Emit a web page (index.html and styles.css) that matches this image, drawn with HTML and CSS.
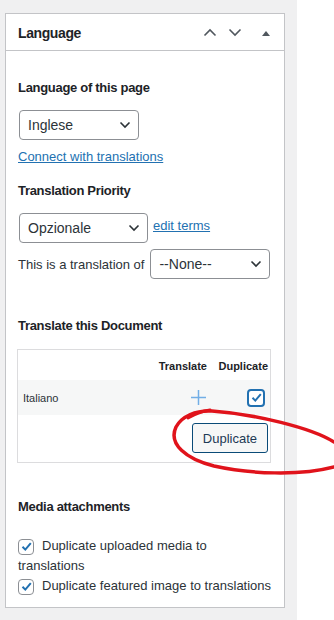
FILE: index.html
```html
<!DOCTYPE html>
<html lang="en">
<head>
    <meta charset="UTF-8">
    <title>Language</title>
    <link rel="stylesheet" href="styles.css">
</head>
<body>
    <div class="sidebar">
        <div class="postbox">
            <div class="postbox-header">
                <h2>Language</h2>
                <div class="handle-actions">
                    <svg class="chev" width="14" height="9" viewBox="0 0 14 9"><path d="M1.5 7.5 L7 2 L12.5 7.5" fill="none" stroke="#50575e" stroke-width="1.6"/></svg>
                    <svg class="chev" width="14" height="9" viewBox="0 0 14 9"><path d="M1.5 1.5 L7 7 L12.5 1.5" fill="none" stroke="#50575e" stroke-width="1.6"/></svg>
                    <svg class="toggle" width="10" height="6" viewBox="0 0 10 6"><path d="M1 6 L5 1 L9 6 Z" fill="#50575e"/></svg>
                </div>
            </div>

            <div class="inside">
                <p class="field-title first">Language of this page</p>
                <div class="select lang-select">
                    <span>Inglese</span>
                    <svg width="12" height="8" viewBox="0 0 12 8"><path d="M1.5 1.5 L6 6 L10.5 1.5" fill="none" stroke="#2c3338" stroke-width="1.6"/></svg>
                </div>
                <a class="link connect" href="#">Connect with translations</a>

                <p class="field-title priority">Translation Priority</p>
                <div class="inline-row priority-row">
                    <div class="select prio-select">
                        <span>Opzionale</span>
                        <svg width="12" height="8" viewBox="0 0 12 8"><path d="M1.5 1.5 L6 6 L10.5 1.5" fill="none" stroke="#2c3338" stroke-width="1.6"/></svg>
                    </div>
                    <a class="link" href="#">edit terms</a>
                </div>
                <div class="inline-row translation-row">
                    <span class="plain">This is a translation of</span>
                    <div class="select none-select">
                        <span>--None--</span>
                        <svg width="12" height="8" viewBox="0 0 12 8"><path d="M1.5 1.5 L6 6 L10.5 1.5" fill="none" stroke="#2c3338" stroke-width="1.6"/></svg>
                    </div>
                </div>

                <p class="field-title document">Translate this Document</p>
                <div class="translate-box">
                    <div class="tb-head">
                        <span></span>
                        <span class="col">Translate</span>
                        <span class="col">Duplicate</span>
                    </div>
                    <div class="tb-row">
                        <span class="lang-name">Italiano</span>
                        <span class="col">
                            <svg width="17" height="17" viewBox="0 0 17 17"><path d="M8.5 1 V16 M1 8.5 H16" stroke="#72aee6" stroke-width="1.5"/></svg>
                        </span>
                        <span class="col">
                            <span class="check focus">
                                <svg width="13" height="13" viewBox="0 0 13 13"><path d="M2.5 6.8 L5.3 9.6 L10.8 3.2" fill="none" stroke="#2271b1" stroke-width="2"/></svg>
                            </span>
                        </span>
                    </div>
                    <div class="tb-actions">
                        <button type="button" class="button">Duplicate</button>
                    </div>
                </div>

                <p class="field-title media">Media attachments</p>
                <div class="checks">
                    <label class="check-line">
                        <span class="check">
                            <svg width="13" height="13" viewBox="0 0 13 13"><path d="M2.5 6.8 L5.3 9.6 L10.8 3.2" fill="none" stroke="#2271b1" stroke-width="2"/></svg>
                        </span>Duplicate uploaded media to translations
                    </label>
                    <label class="check-line">
                        <span class="check">
                            <svg width="13" height="13" viewBox="0 0 13 13"><path d="M2.5 6.8 L5.3 9.6 L10.8 3.2" fill="none" stroke="#2271b1" stroke-width="2"/></svg>
                        </span>Duplicate featured image to translations
                    </label>
                </div>
            </div>
        </div>
    </div>

    <!-- hand-drawn red circle around the Duplicate button -->
    <svg class="scribble" width="334" height="620" viewBox="0 0 334 620">
        <path d="M334 442 C312 428 255 414 212 411 C196 410 182 416 176 427 C168 444 186 459 214 466 C250 474 300 476 334 467" fill="none" stroke="#e0131b" stroke-width="3.5" stroke-linecap="round"/>
        <path d="M188 418 C195 414 203 411 210 410" fill="none" stroke="#e0131b" stroke-width="3" stroke-linecap="round"/>
    </svg>
</body>
</html>
```

FILE: styles.css
```css
* {
    margin: 0;
    padding: 0;
    box-sizing: border-box;
}

body {
    font-family: "Liberation Sans", Arial, sans-serif;
    font-size: 13px;
    color: #1d2327;
    background: #fff;
    width: 334px;
    height: 620px;
    overflow: hidden;
    position: relative;
}

.sidebar {
    width: 297px;
    height: 620px;
    background: #f0f0f1;
    padding: 13px 0 0 5px;
}

.postbox {
    width: 280px;
    background: #fff;
    border: 1px solid #c3c4c7;
}

.postbox-header {
    height: 37px;
    border-bottom: 1px solid #c3c4c7;
    display: flex;
    align-items: center;
    justify-content: space-between;
    padding: 0 13px 0 12px;
}

.postbox-header h2 {
    font-size: 14px;
    font-weight: 600;
    letter-spacing: -0.4px;
    color: #1d2327;
    line-height: 1;
    margin-top: 1px;
}

.handle-actions {
    display: flex;
    align-items: center;
    margin-top: 1px;
}

.handle-actions .chev {
    margin-right: 11px;
}

.handle-actions .toggle {
    margin-left: 8px;
}

.inside {
    padding: 0 12px 11px 12px;
}

.field-title {
    font-weight: 600;
    letter-spacing: -0.3px;
    line-height: 18px;
    color: #1d2327;
}

.field-title.first { margin-top: 28px; }
.field-title.priority { margin-top: 16px; }
.field-title.document { margin-top: 38px; }
.field-title.media { margin-top: 35px; }

.select {
    height: 30px;
    border: 1px solid #8c8f94;
    border-radius: 4px;
    display: flex;
    align-items: center;
    justify-content: space-between;
    padding: 0 7px 0 8px;
    font-size: 14px;
    color: #2c3338;
    background: #fff;
}

.lang-select {
    width: 120px;
    margin: 13px 0 0 1px;
}

.prio-select {
    width: 129px;
    margin-left: 1px;
}

.none-select {
    width: 120px;
}

.link {
    color: #2271b1;
    text-decoration: underline;
    line-height: 18px;
}

.link.connect {
    display: block;
    margin-top: 8px;
}

.inline-row {
    display: flex;
    align-items: center;
}

.priority-row {
    margin-top: 13px;
    gap: 5px;
}

.priority-row .link {
    margin-top: -4px;
}

.translation-row {
    margin-top: 6px;
    gap: 6px;
    white-space: nowrap;
    color: #2c3338;
}

.translate-box {
    width: 254px;
    margin: 14px 0 0 -1px;
    border: 1px solid #dcdcde;
}

.tb-head,
.tb-row {
    display: grid;
    grid-template-columns: 1fr 48px 49px;
    column-gap: 12px;
    align-items: center;
    padding: 0 2px 0 5px;
}

.tb-head {
    height: 30px;
    font-size: 11px;
    font-weight: 700;
    color: #1d2327;
    padding-top: 2px;
}

.tb-row {
    height: 35px;
    background: #f6f7f7;
}

.col {
    display: flex;
    justify-content: flex-end;
}

.lang-name {
    font-size: 11px;
    color: #2c3338;
}

.tb-row .col svg {
    display: block;
}

.check {
    width: 16px;
    height: 16px;
    border: 1px solid #8c8f94;
    border-radius: 4px;
    display: inline-flex;
    align-items: center;
    justify-content: center;
    background: #fff;
    flex-shrink: 0;
}

.check.focus {
    width: 18px;
    height: 18px;
    border: 2px solid #2271b1;
    margin-right: 3px;
}

.tb-actions {
    display: flex;
    justify-content: flex-end;
    padding: 8px 2px 9px 0;
}

.button {
    font-family: inherit;
    font-size: 13px;
    color: #1d3a55;
    background: #f6f7f7;
    border: 1px solid #0a4b78;
    border-radius: 3px;
    height: 30px;
    padding: 0 10px;
    cursor: pointer;
}

.checks {
    margin-top: 20px;
    margin-right: -4px;
}

.check-line {
    display: block;
    line-height: 20px;
    color: #2c3338;
}

.check-line .check {
    vertical-align: -3px;
    margin-right: 8px;
}

.scribble {
    position: absolute;
    left: 0;
    top: 0;
    pointer-events: none;
}
```
